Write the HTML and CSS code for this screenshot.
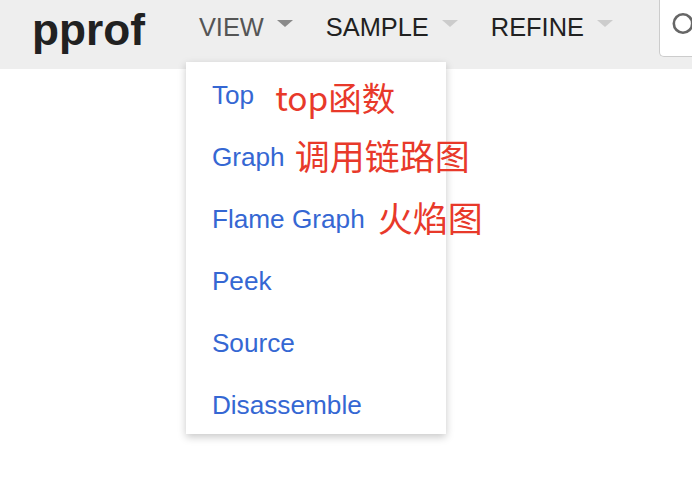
FILE: index.html
```html
<!DOCTYPE html>
<html lang="en">
<head>
<meta charset="utf-8">
<title>pprof</title>
<link rel="stylesheet" href="styles.css">
</head>
<body>
<header class="header">
  <h1 class="title">pprof</h1>
  <nav class="menus">
    <div class="menu menu-open">
      <span class="menu-name">VIEW</span><span class="caret caret-dark"></span>
      <div class="submenu">
        <a class="item" href="#">Top<span class="note note-top">top函数</span></a>
        <a class="item" href="#">Graph<span class="note note-graph">调用链路图</span></a>
        <a class="item" href="#">Flame Graph<span class="note note-flame">火焰图</span></a>
        <a class="item" href="#">Peek</a>
        <a class="item" href="#">Source</a>
        <a class="item" href="#">Disassemble</a>
      </div>
    </div>
    <div class="menu">
      <span class="menu-name">SAMPLE</span><span class="caret"></span>
    </div>
    <div class="menu">
      <span class="menu-name">REFINE</span><span class="caret"></span>
    </div>
  </nav>
  <div class="search">
    <svg class="search-icon" width="40" height="40" viewBox="0 0 40 40" aria-hidden="true">
      <circle cx="23" cy="17.5" r="9.2" fill="none" stroke="#666" stroke-width="2.6"/>
    </svg>
  </div>
</header>
</body>
</html>
```
FILE: styles.css
```css
html, body {
  margin: 0;
  padding: 0;
  background: #fff;
  overflow: hidden;
}

body {
  width: 692px;
  height: 504px;
  font-family: "Liberation Sans", Arial, sans-serif;
}

.header {
  display: flex;
  align-items: flex-start;
  height: 69px;
  background: #eeeeee;
  padding-left: 32px;
  position: relative;
}

.title {
  margin: 8px 0 0 0;
  font-size: 44.2px;
  line-height: 44px;
  font-weight: 700;
  color: #212121;
  letter-spacing: 0;
}

.menus {
  display: flex;
  align-items: flex-start;
  gap: 33px;
  margin-left: 54px;
}

.menu {
  display: flex;
  align-items: flex-start;
  position: relative;
  padding-top: 15px;
}

.menu-name {
  font-size: 25.4px;
  line-height: 25px;
  color: #212121;
}

.menu-open .menu-name {
  color: #555555;
}

.caret {
  width: 0;
  height: 0;
  margin-left: 13px;
  margin-top: 5px;
  border-left: 8px solid transparent;
  border-right: 8px solid transparent;
  border-top: 7px solid #cccccc;
}

.caret-dark {
  border-top-color: #8a8a8a;
}

.submenu {
  position: absolute;
  left: -13px;
  top: 62px;
  width: 260px;
  background: #fff;
  box-shadow: 0 3px 8px rgba(0, 0, 0, 0.22);
  display: flex;
  flex-direction: column;
  z-index: 10;
}

.item {
  display: flex;
  align-items: center;
  height: 58px;
  padding: 4px 0 0 26px;
  font-size: 26.2px;
  color: #3567d3;
  text-decoration: none;
  white-space: nowrap;
}

.note {
  font-family: "Noto Sans CJK SC", "Liberation Sans", sans-serif;
  font-size: 35px;
  line-height: 35px;
  color: #e8392a;
}

.note-top {
  font-size: 33.5px;
  margin-left: 21px;
  margin-top: 2px;
}

.note-graph {
  margin-left: 10px;
  margin-top: -6px;
}

.note-flame {
  margin-left: 13px;
  margin-top: -5px;
}

.search {
  flex: 1;
  height: 62px;
  margin-top: -5px;
  margin-left: 46px;
  background: #fff;
  border: 1px solid #cccccc;
  border-right: none;
  border-radius: 5px 0 0 5px;
  box-sizing: border-box;
}

.search-icon {
  display: block;
  margin-top: 10px;
}
```
